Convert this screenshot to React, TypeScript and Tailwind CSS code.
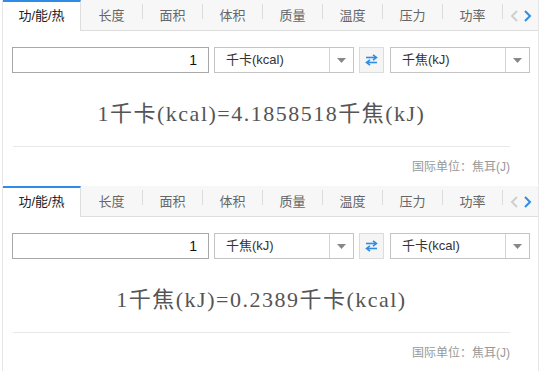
import React from 'react';

const tabs = ['长度', '面积', '体积', '质量', '温度', '压力', '功率'];

const Caret = () => (
  <svg width="9" height="5" viewBox="0 0 9 5">
    <path d="M0 0 L9 0 L4.5 5 Z" fill="#888" />
  </svg>
);

const SwapIcon = () => (
  <svg width="13" height="12" viewBox="0 0 13 12" fill="none" stroke="#2e8de6" strokeWidth="1.6">
    <path d="M1 3.5 H11" />
    <path d="M8 0.8 L11.5 3.5 L8 6.2" />
    <path d="M12 8.5 H2" />
    <path d="M5 5.8 L1.5 8.5 L5 11.2" />
  </svg>
);

interface Props {
  from: string;
  to: string;
  result: React.ReactNode;
}

const Select = ({ label }: { label: string }) => (
  <div className="flex h-[26px] w-[140px] border border-[#c4c4c4] bg-white">
    <div className="flex flex-1 items-center pl-[11px] text-[13px] text-[#333]">{label}</div>
    <div className="flex w-[24px] items-center justify-center border-l border-[#d4d4d4]">
      <Caret />
    </div>
  </div>
);

const Panel: React.FC<Props> = ({ from, to, result }) => {
  return (
    <div className="ml-[2px] h-[185px] w-[537px] border-x border-[#e6e6e6]">
      <div className="flex h-[31px] border-b border-[#dedede] bg-[#f7f7f7]">
        <div className="-mb-px flex h-[31px] w-[78px] items-center justify-center border-r border-t-2 border-r-[#dedede] border-t-[#2e8de6] bg-white pb-[1px] text-[13px] text-[#222]">
          功/能/热
        </div>
        {tabs.map((t, i) => (
          <React.Fragment key={t}>
            <div
              className={
                'flex items-center justify-center pt-[1px] text-[13px] text-[#666] ' +
                (i === 0 ? 'w-[61px]' : 'w-[59px]')
              }
            >
              {t}
            </div>
            <div className="mt-[4px] h-[15px] w-px bg-[#dcdcdc]" />
          </React.Fragment>
        ))}
        <div className="flex flex-1 items-center justify-center gap-[6px] pt-[1px]">
          <svg width="8" height="12" viewBox="0 0 8 12" fill="none" stroke="#cfcfcf" strokeWidth="2">
            <path d="M7 1 L2 6 L7 11" />
          </svg>
          <svg width="8" height="12" viewBox="0 0 8 12" fill="none" stroke="#2e8de6" strokeWidth="2">
            <path d="M1 1 L6 6 L1 11" />
          </svg>
        </div>
      </div>

      <div className="mt-[16px] flex pl-[9px]">
        <div className="flex h-[26px] w-[197px] items-center justify-end border border-[#a8a8a8] pr-[11px] font-['Liberation_Sans',sans-serif] text-[14px] text-[#111]">
          1
        </div>
        <div className="ml-[5px]">
          <Select label={from} />
        </div>
        <div className="ml-[5px] flex h-[26px] w-[25px] items-center justify-center border border-[#dcdcdc] bg-[#f5f5f5]">
          <SwapIcon />
        </div>
        <div className="ml-[6px]">
          <Select label={to} />
        </div>
      </div>

      <div className="ml-[10px] w-[497px]">
        <div className="mt-[26px] text-center font-['Liberation_Serif','Noto_Sans_CJK_SC',serif] text-[22px] leading-[30px] tracking-[1.5px] text-[#555]">
          {result}
        </div>
        <div className="mt-[17px] h-px bg-[#e8e8e8]" />
        <div className="mt-[12px] text-right text-[12px] leading-[16px] text-[#999]">国际单位：焦耳(J)</div>
      </div>
    </div>
  );
};

export default function App() {
  return (
    <div className="h-[371px] w-[543px] bg-white font-['Liberation_Sans','Noto_Sans_CJK_SC',sans-serif]">
      <Panel from="千卡(kcal)" to="千焦(kJ)" result="1千卡(kcal)=4.1858518千焦(kJ)" />
      <div className="h-[1px]" />
      <Panel from="千焦(kJ)" to="千卡(kcal)" result="1千焦(kJ)=0.2389千卡(kcal)" />
    </div>
  );
}
